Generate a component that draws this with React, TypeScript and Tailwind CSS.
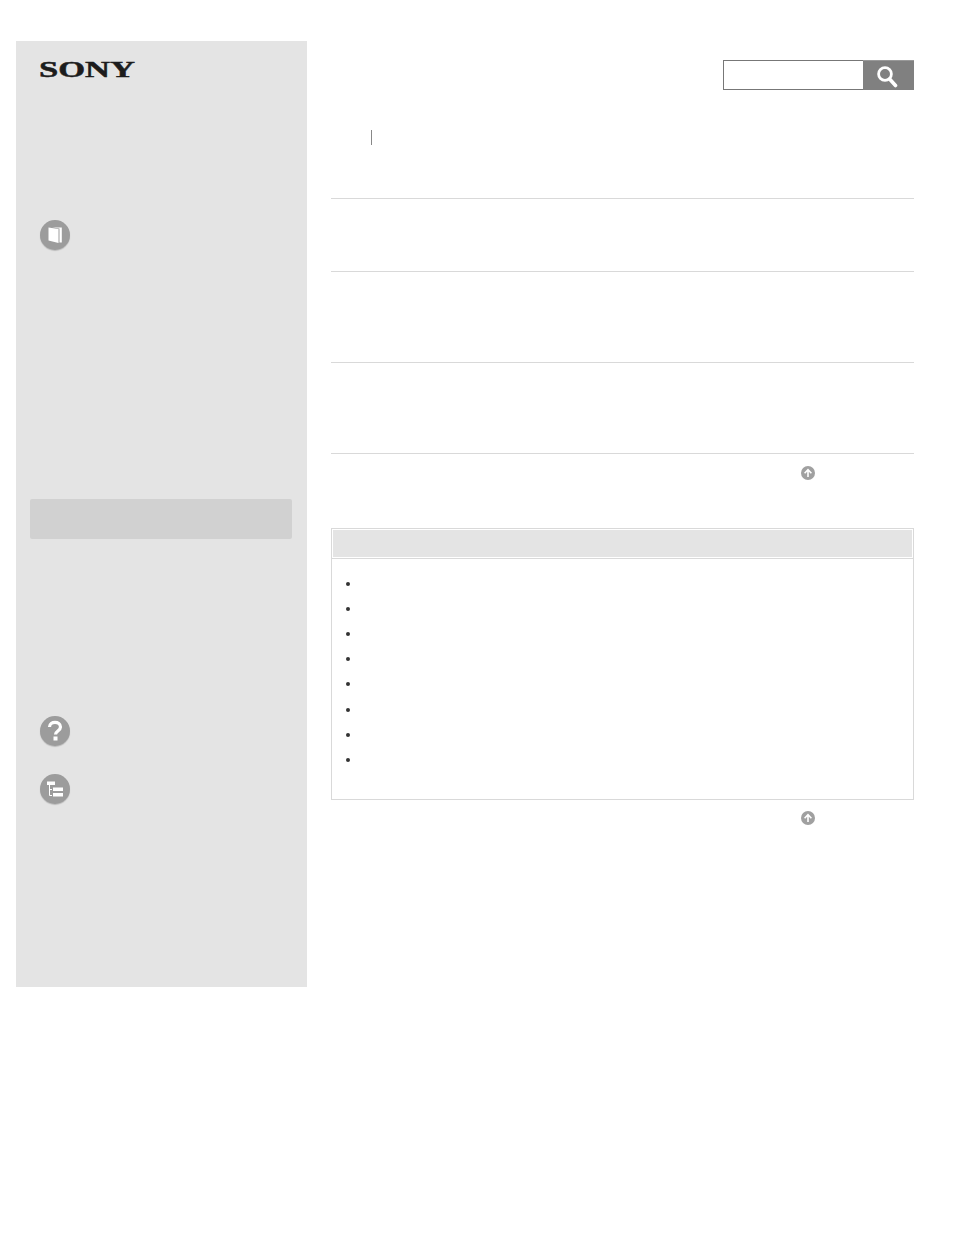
import React from "react";

const IconDisc = ({ children, className }: { children: React.ReactNode; className?: string }) => (
	<div className={`w-[30px] h-[30px] rounded-full bg-[#9c9c9c] shadow-[0_1px_1px_rgba(0,0,0,0.18)] ${className ?? ""}`}>
		<svg viewBox="0 0 30 30" className="w-[30px] h-[30px]">
			{children}
		</svg>
	</div>
);

const UpArrow = ({ className }: { className?: string }) => (
	<div className={`flex justify-end pr-[99px] ${className ?? ""}`}>
		<svg viewBox="0 0 14 14" className="w-[14px] h-[14px]">
			<circle cx="7" cy="7" r="7" fill="#a0a0a0" />
			<path d="M3.6 7.2 L7 3.6 L10.4 7.2 M7 4 V11" stroke="#fff" strokeWidth="1.6" fill="none" />
		</svg>
	</div>
);

const bulletRows = [0, 1, 2, 3, 4, 5, 6, 7];

export default function App() {
	return (
		<div className="flex min-h-[1235px] bg-white pl-[16px] pt-[41px] font-['Liberation_Sans',sans-serif]">
			{/* Sidebar */}
			<aside className="w-[291px] h-[946px] bg-[#e4e4e4] shrink-0">
				<div className="h-[16px] mt-[20px] ml-[23px] flex items-center">
					<span className="origin-left scale-x-[1.44] font-['Liberation_Serif',serif] font-bold text-[24px] leading-none text-[#1c1c1c] [-webkit-text-stroke:0.5px_#1c1c1c]">
						SONY
					</span>
				</div>
				<IconDisc className="mt-[143px] ml-[24px]">
					<path d="M8.5 7.5 L18.5 9 V23 L8.5 20.5 Z" fill="#fff" />
					<path d="M12 7.5 H21.8 V22.5 H19.5 V8.6 Z" fill="#fff" />
				</IconDisc>
				<div className="mt-[249px] ml-[14px] w-[262px] h-[40px] rounded-[2px] bg-[#d1d1d1]" />
				<IconDisc className="mt-[177px] ml-[24px]">
					<path
						d="M9.5 11 C9.5 4.8 20.5 4.8 20.5 11 C20.5 15 15.5 15 15.5 18.5"
						stroke="#fff"
						strokeWidth="3.2"
						fill="none"
					/>
					<rect x="13.5" y="20.5" width="4" height="4" fill="#fff" />
				</IconDisc>
				<IconDisc className="mt-[28px] ml-[24px]">
					<rect x="7" y="7.5" width="8" height="3.5" fill="#fff" />
					<path d="M9.5 11 V21.5 H12 M9.5 15.5 H12" stroke="#fff" strokeWidth="1" fill="none" />
					<rect x="13" y="13.5" width="10" height="3.5" fill="#fff" />
					<rect x="13" y="19" width="10" height="3.5" fill="#fff" />
				</IconDisc>
			</aside>

			{/* Main column */}
			<main className="w-[583px] ml-[24px] shrink-0">
				<div className="mt-[19px] flex justify-end h-[30px]">
					<div className="w-[140px] h-[30px] border border-[#777] border-r-0 bg-white" />
					<div className="w-[51px] h-[30px] bg-[#808080] border-t border-[#999] flex items-center justify-center">
						<svg viewBox="0 0 24 24" className="w-[24px] h-[24px] mr-[3px]">
							<circle cx="10" cy="10" r="6.4" stroke="#fff" strokeWidth="2.8" fill="none" />
							<path d="M14.6 15 L20.5 21.5" stroke="#fff" strokeWidth="3.6" strokeLinecap="round" />
						</svg>
					</div>
				</div>
				<div className="mt-[40px] ml-[40px] w-px h-[15px] bg-[#888]" />
				<div className="mt-[53px] h-[73px] border-t border-[#d9d9d9]" />
				<div className="h-[91px] border-t border-[#d9d9d9]" />
				<div className="h-[91px] border-t border-[#d9d9d9]" />
				<div className="border-t border-[#d9d9d9] pt-[12px]">
					<UpArrow />
				</div>

				<section className="mt-[48px] h-[272px] border border-[#d9d9d9]">
					<div className="m-px h-[27px] bg-[#e4e4e4]" />
					<div className="border-t border-[#d9d9d9]" />
					<ul className="pt-[12px] pl-[14px]">
						{bulletRows.map((row) => (
							<li key={row} className="h-[25.2px] flex items-center">
								<span className="w-[4px] h-[4px] rounded-full bg-[#333]" />
							</li>
						))}
					</ul>
				</section>
				<UpArrow className="mt-[11px]" />
			</main>
		</div>
	);
}
